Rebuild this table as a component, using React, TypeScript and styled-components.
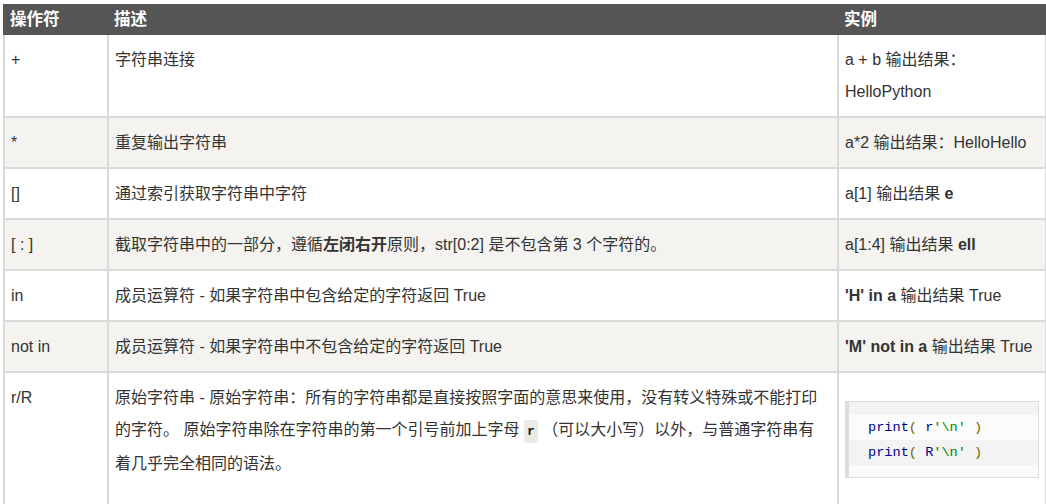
import styled, { createGlobalStyle } from "styled-components";

const GlobalStyle = createGlobalStyle`
  body {
    margin: 0;
    background: #fff;
    font-family: "Liberation Sans", "Noto Sans CJK SC", sans-serif;
    color: #333;
  }
`;

const Page = styled.div`
  padding: 4px 1px 0 3px;
`;

const Table = styled.table`
  width: 1042px;
  border-collapse: collapse;
  table-layout: fixed;
  font-size: 16px;
`;

const HeadCell = styled.th`
  background: #555;
  color: #fff;
  font-weight: 700;
  font-size: 16.5px;
  text-align: left;
  line-height: 23px;
  padding: 2px 5px;
  border: 2px solid #555;
`;

const Row = styled.tr`
  &:nth-child(even) {
    background: #f4f3f0;
  }
`;

const Cell = styled.td<{ $tall?: boolean }>`
  vertical-align: top;
  line-height: 32px;
  padding: 9px 6px ${(p) => (p.$tall ? "40px" : "8px")};
  border: 2px solid #dadada;
`;

const InlineCode = styled.code`
  font-family: "Liberation Mono", "DejaVu Sans Mono", monospace;
  font-weight: 700;
  font-size: 13px;
  background: #ebeae7;
  border-radius: 3px;
  padding: 4px 3px;
  color: #222;
`;

const CodeBox = styled.pre`
  margin: 19px 0 0;
  border: 1px solid #dddddd;
  border-left: 4px solid #dddddd;
  background: #fbfbfb;
  padding: 13px 0 12px;
  font-family: "Liberation Mono", "DejaVu Sans Mono", monospace;
  font-size: 13.6px;

  &::before {
    content: "";
    display: block;
    height: 13px;
    margin-top: -13px;
    background: #f3f3f3;
  }
`;

const CodeLine = styled.div<{ $shade?: boolean }>`
  height: 25px;
  line-height: 25px;
  padding-left: 19px;
  background: ${(p) => (p.$shade ? "#f3f3f3" : "#fbfbfb")};
`;

const Kwd = styled.span`
  color: #000088;
`;

const Pun = styled.span`
  color: #666600;
`;

const Str = styled.span`
  color: #008800;
`;

const codeLines = ["r", "R"];

const App = () => {
  return (
    <Page>
      <GlobalStyle />
      <Table>
        <colgroup>
          <col style={{ width: 104 }} />
          <col style={{ width: 730 }} />
          <col style={{ width: 208 }} />
        </colgroup>
        <thead>
          <tr>
            <HeadCell>操作符</HeadCell>
            <HeadCell>描述</HeadCell>
            <HeadCell>实例</HeadCell>
          </tr>
        </thead>
        <tbody>
          <Row>
            <Cell>+</Cell>
            <Cell>字符串连接</Cell>
            <Cell>
              a + b 输出结果：
              <br />
              HelloPython
            </Cell>
          </Row>
          <Row>
            <Cell>*</Cell>
            <Cell>重复输出字符串</Cell>
            <Cell>a*2 输出结果：HelloHello</Cell>
          </Row>
          <Row>
            <Cell>[]</Cell>
            <Cell>通过索引获取字符串中字符</Cell>
            <Cell>
              a[1] 输出结果 <b>e</b>
            </Cell>
          </Row>
          <Row>
            <Cell>[ : ]</Cell>
            <Cell>
              截取字符串中的一部分，遵循<b>左闭右开</b>原则，str[0:2]
              是不包含第 3 个字符的。
            </Cell>
            <Cell>
              a[1:4] 输出结果 <b>ell</b>
            </Cell>
          </Row>
          <Row>
            <Cell>in</Cell>
            <Cell>成员运算符 - 如果字符串中包含给定的字符返回 True</Cell>
            <Cell>
              <b>'H' in a</b> 输出结果 True
            </Cell>
          </Row>
          <Row>
            <Cell>not in</Cell>
            <Cell>成员运算符 - 如果字符串中不包含给定的字符返回 True</Cell>
            <Cell>
              <b>'M' not in a</b> 输出结果 True
            </Cell>
          </Row>
          <Row>
            <Cell $tall>r/R</Cell>
            <Cell $tall>
              原始字符串 - 原始字符串：所有的字符串都是直接按照字面的意思来使用，没有转义特殊或不能打印
              <br />
              的字符。 原始字符串除在字符串的第一个引号前加上字母{" "}
              <InlineCode>r</InlineCode> （可以大小写）以外，与普通字符串有
              <br />
              着几乎完全相同的语法。
            </Cell>
            <Cell $tall>
              <CodeBox>
                {codeLines.map((prefix, i) => (
                  <CodeLine key={prefix} $shade={i % 2 === 1}>
                    <Kwd>print</Kwd>
                    <Pun>( </Pun>
                    <Kwd>{prefix}</Kwd>
                    <Str>'\n'</Str>
                    <Pun> )</Pun>
                  </CodeLine>
                ))}
              </CodeBox>
            </Cell>
          </Row>
        </tbody>
      </Table>
    </Page>
  );
};

export default App;
